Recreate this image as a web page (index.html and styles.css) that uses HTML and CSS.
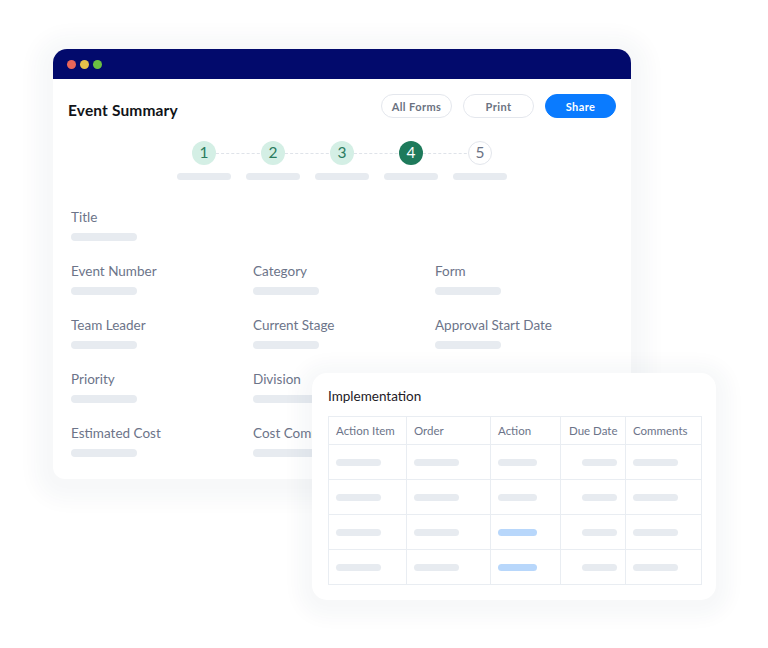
FILE: index.html
```html
<!DOCTYPE html>
<html lang="en">
<head>
<meta charset="utf-8">
<title>Event Summary</title>
<link rel="stylesheet" href="styles.css">
</head>
<body>
<div class="stage">
  <div class="scene">
    <div class="window">
      <div class="titlebar">
        <span class="dot red"></span><span class="dot yellow"></span><span class="dot green"></span>
      </div>
      <div class="content">
        <div class="toolbar">
          <h1 class="page-title">Event Summary</h1>
          <div class="actions">
            <button class="btn">All Forms</button>
            <button class="btn">Print</button>
            <button class="btn primary">Share</button>
          </div>
        </div>
        <div class="steps">
          <div class="step done"><span class="num">1</span><span class="bar"></span></div>
          <div class="step done"><span class="num">2</span><span class="bar"></span></div>
          <div class="step done"><span class="num">3</span><span class="bar"></span></div>
          <div class="step active"><span class="num">4</span><span class="bar"></span></div>
          <div class="step todo last"><span class="num">5</span><span class="bar"></span></div>
        </div>
        <div class="fields">
          <div class="field wide"><span class="label">Title</span><span class="bar"></span></div>
          <div class="field"><span class="label">Event Number</span><span class="bar"></span></div>
          <div class="field"><span class="label">Category</span><span class="bar"></span></div>
          <div class="field"><span class="label">Form</span><span class="bar"></span></div>
          <div class="field"><span class="label">Team Leader</span><span class="bar"></span></div>
          <div class="field"><span class="label">Current Stage</span><span class="bar"></span></div>
          <div class="field"><span class="label">Approval Start Date</span><span class="bar"></span></div>
          <div class="field"><span class="label">Priority</span><span class="bar"></span></div>
          <div class="field"><span class="label">Division</span><span class="bar"></span></div>
          <div class="field"><span class="label">&nbsp;</span><span class="bar"></span></div>
          <div class="field"><span class="label">Estimated Cost</span><span class="bar"></span></div>
          <div class="field"><span class="label">Cost Comments</span><span class="bar"></span></div>
        </div>
      </div>
    </div>

    <div class="impl">
      <h2 class="impl-title">Implementation</h2>
      <table class="grid">
        <colgroup>
          <col class="c1"><col class="c2"><col class="c3"><col class="c4"><col class="c5">
        </colgroup>
        <thead>
          <tr><th>Action Item</th><th>Order</th><th>Action</th><th class="due">Due Date</th><th>Comments</th></tr>
        </thead>
        <tbody>
          <tr><td><span class="pill w45"></span></td><td><span class="pill w45"></span></td><td><span class="pill w39"></span></td><td class="due"><span class="pill w35"></span></td><td><span class="pill w45"></span></td></tr>
          <tr><td><span class="pill w45"></span></td><td><span class="pill w45"></span></td><td><span class="pill w39"></span></td><td class="due"><span class="pill w35"></span></td><td><span class="pill w45"></span></td></tr>
          <tr><td><span class="pill w45"></span></td><td><span class="pill w45"></span></td><td><span class="pill w39 blue"></span></td><td class="due"><span class="pill w35"></span></td><td><span class="pill w45"></span></td></tr>
          <tr><td><span class="pill w45"></span></td><td><span class="pill w45"></span></td><td><span class="pill w39 blue"></span></td><td class="due"><span class="pill w35"></span></td><td><span class="pill w45"></span></td></tr>
        </tbody>
      </table>
    </div>
  </div>
</div>
</body>
</html>
```

FILE: styles.css
```css
* { box-sizing: border-box; }

html, body {
  margin: 0;
  padding: 0;
  background: #ffffff;
}

body {
  font-family: Lato, "Noto Sans", "Liberation Sans", sans-serif;
  width: 768px;
  height: 648px;
  overflow: hidden;
}

.stage {
  padding: 49px 0 0 53px;
}

.scene {
  position: relative;
  width: 578px;
}

/* main window */
.window {
  width: 578px;
  background: #ffffff;
  border-radius: 14px 14px 6px 12px;
  box-shadow: 0 4px 20px 18px rgba(40, 50, 80, 0.035);
  overflow: hidden;
}

.titlebar {
  height: 30px;
  background: #020a6c;
  display: flex;
  align-items: center;
  gap: 4px;
  padding-left: 14px;
}

.dot {
  width: 9px;
  height: 9px;
  border-radius: 50%;
  display: block;
}
.dot.red { background: #ea6659; }
.dot.yellow { background: #e6c24a; }
.dot.green { background: #6bbf42; }

.content {
  padding: 15px 15px 22px 15px;
}

.toolbar {
  display: flex;
  align-items: center;
  justify-content: space-between;
  height: 24px;
}

.page-title {
  margin: 0;
  font-size: 15.5px;
  font-weight: 700;
  color: #111318;
  letter-spacing: 0.15px;
  padding-top: 8px;
}

.actions {
  display: flex;
  gap: 11px;
}

.btn {
  width: 71px;
  height: 24px;
  border-radius: 12px;
  border: 1px solid #e4e7ed;
  background: #ffffff;
  color: #6b7281;
  font-family: Lato, "Noto Sans", "Liberation Sans", sans-serif;
  font-size: 11px;
  font-weight: 700;
  letter-spacing: 0.4px;
  padding: 0;
}

.btn.primary {
  background: #0a7bff;
  border-color: #0a7bff;
  color: #ffffff;
}

/* steps */
.steps {
  display: flex;
  justify-content: center;
  gap: 15px;
  margin-top: 23px;
}

.step {
  position: relative;
  width: 54px;
  display: flex;
  flex-direction: column;
  align-items: center;
  gap: 8px;
}

.step:not(.last)::after {
  content: "";
  position: absolute;
  top: 12px;
  left: 39px;
  width: 54px;
  border-top: 1px dashed #dfe3e9;
}

.step .num {
  width: 24px;
  height: 24px;
  border-radius: 50%;
  display: flex;
  align-items: center;
  justify-content: center;
  font-size: 15.5px;
  line-height: 1;
  position: relative;
  z-index: 1;
}

.step.done .num {
  background: #d4efe5;
  color: #2a7c5e;
}

.step.active .num {
  background: #1e7a5b;
  color: #ffffff;
}

.step.todo .num {
  background: #ffffff;
  border: 1px solid #e3e6ec;
  color: #6b7385;
}

.step .bar {
  display: block;
  width: 54px;
  height: 7px;
  border-radius: 4px;
  background: #e7ebf0;
}

/* fields */
.fields {
  margin-top: 29px;
  padding-left: 3px;
  display: grid;
  grid-template-columns: 182px 182px 182px;
  row-gap: 22px;
}

.field {
  display: flex;
  flex-direction: column;
  gap: 8px;
}

.field.wide {
  grid-column: 1 / 4;
}

.field .label {
  font-size: 13.5px;
  line-height: 16px;
  color: #6c7489;
  white-space: nowrap;
}

.field .bar {
  display: block;
  width: 66px;
  height: 8px;
  border-radius: 4px;
  background: #e7ebf0;
}

/* implementation card (overlaps the window) */
.impl {
  position: absolute;
  left: 259px;
  top: 324px;
  width: 404px;
  height: 227px;
  background: #ffffff;
  border-radius: 15px;
  padding: 14px 15px 14px 16px;
  box-shadow: 0 4px 18px 14px rgba(40, 50, 80, 0.035);
}

.impl-title {
  margin: 0 0 11px 0;
  font-size: 13.5px;
  font-weight: 400;
  line-height: 18px;
  color: #1d2026;
}

.grid {
  width: 373px;
  border-collapse: collapse;
  table-layout: fixed;
}

.grid .c1 { width: 78px; }
.grid .c2 { width: 84px; }
.grid .c3 { width: 70px; }
.grid .c4 { width: 65px; }
.grid .c5 { width: 76px; }

.grid th,
.grid td {
  border: 1px solid #e9edf2;
  padding: 0 0 0 7px;
  text-align: left;
}

.grid th {
  height: 28px;
  font-size: 11.5px;
  font-weight: 400;
  color: #6c7489;
  white-space: nowrap;
}

.grid td {
  height: 35px;
}

.grid th.due {
  padding-left: 8px;
}

.grid td.due {
  padding-left: 21px;
}

.pill {
  display: block;
  height: 7px;
  border-radius: 4px;
  background: #e7ebf0;
}

.pill.w45 { width: 45px; }
.pill.w39 { width: 39px; }
.pill.w35 { width: 35px; }
.pill.blue { background: #b8d7fb; }
```
